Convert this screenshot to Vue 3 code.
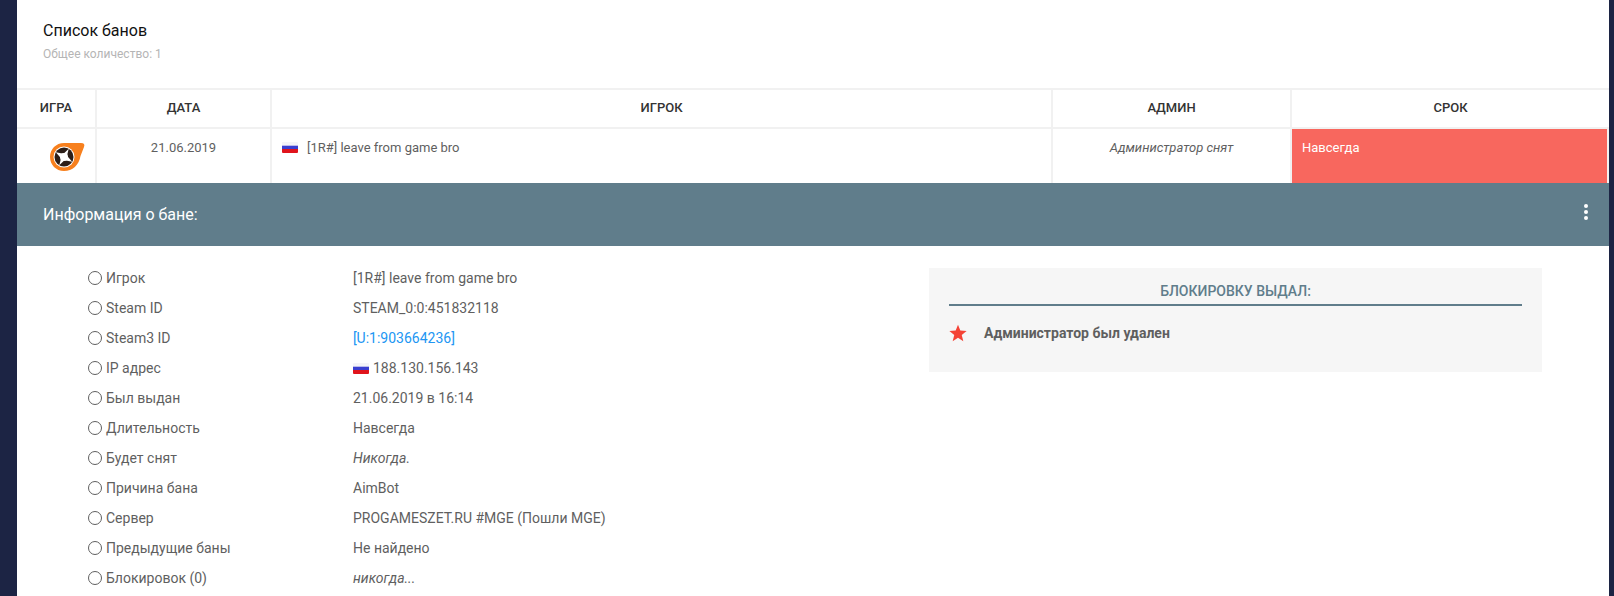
<template>
  <div class="page">
    <div class="card">
      <div class="card-head">
        <h2 class="title">Список банов</h2>
        <small class="subtitle">Общее количество: 1</small>
      </div>

      <div class="ban-row ban-row--head">
        <div class="cell cell--th">Игра</div>
        <div class="cell cell--th">Дата</div>
        <div class="cell cell--th">Игрок</div>
        <div class="cell cell--th">Админ</div>
        <div class="cell cell--th cell--last">Срок</div>
      </div>
      <div class="ban-row ban-row--body">
        <div class="cell cell--icon">
          <svg class="game-icon" viewBox="0 0 36 30" width="36" height="30">
            <path d="M15 1 H32 C35 1 36 2.5 35 5 L31.500 14 C30 23 23.500 29 15 29 C7 29 1 22.700 1 15 C1 7.300 7 1 15 1 Z" fill="#f7801e" />
            <circle cx="15" cy="15" r="10.500" fill="#fff" />
            <circle cx="15" cy="15" r="9.500" fill="#2c1e18" />
            <path d="M15 5.500 L17 12.500 L24.500 15 L17 17.500 L15 24.500 L13 17.500 L5.500 15 L13 12.500 Z" fill="#fff" transform="rotate(30 15 15)" />
            <circle cx="15" cy="15" r="4" fill="#fff" />
          </svg>
        </div>
        <div class="cell cell--center">21.06.2019</div>
        <div class="cell cell--player">
          <span class="flag"></span>
          <span>[1R#] leave from game bro</span>
        </div>
        <div class="cell cell--center"><em>Администратор снят</em></div>
        <div class="cell cell--term">Навсегда</div>
      </div>

      <div class="band">
        <span class="band-title">Информация о бане:</span>
        <span class="dots"><i></i><i></i><i></i></span>
      </div>

      <div class="info">
        <ul class="facts">
          <li v-for="f in facts" :key="f.label" class="fact">
            <span class="fact-label"><span class="ring"></span>{{ f.label }}</span>
            <span class="fact-value">
              <span v-if="f.flag" class="flag flag--ip"></span>
              <a v-if="f.link" class="link">{{ f.value }}</a>
              <em v-else-if="f.italic">{{ f.value }}</em>
              <template v-else>{{ f.value }}</template>
            </span>
          </li>
        </ul>

        <aside class="issuer">
          <div class="issuer-title">Блокировку выдал:</div>
          <div class="issuer-row">
            <svg class="star" viewBox="0 0 24 24" width="18" height="18">
              <path d="M12 1 L15.100 8.800 L23.500 9.400 L17 14.700 L19.100 22.900 L12 18.400 L4.900 22.900 L7 14.700 L0.500 9.400 L8.900 8.800 Z" fill="#f44336" />
            </svg>
            <b>Администратор был удален</b>
          </div>
        </aside>
      </div>
    </div>
  </div>
</template>

<script setup>
const facts = [
  { label: 'Игрок', value: '[1R#] leave from game bro' },
  { label: 'Steam ID', value: 'STEAM_0:0:451832118' },
  { label: 'Steam3 ID', value: '[U:1:903664236]', link: true },
  { label: 'IP адрес', value: '188.130.156.143', flag: true },
  { label: 'Был выдан', value: '21.06.2019 в 16:14' },
  { label: 'Длительность', value: 'Навсегда' },
  { label: 'Будет снят', value: 'Никогда.', italic: true },
  { label: 'Причина бана', value: 'AimBot' },
  { label: 'Сервер', value: 'PROGAMESZET.RU #MGE (Пошли MGE)' },
  { label: 'Предыдущие баны', value: 'Не найдено' },
  { label: 'Блокировок (0)', value: 'никогда...', italic: true },
];
</script>

<style>
html,
body {
  margin: 0;
  height: 596px;
  overflow: hidden;
  background: #1c2444;
}
</style>

<style scoped>
.page {
  height: 596px;
  padding: 0 5px 0 17px;
  box-sizing: border-box;
  font-family: Roboto, "Liberation Sans", sans-serif;
  font-size: 14px;
  color: #5f5f5f;
}
.card {
  height: 596px;
  overflow: hidden;
  background: #fff;
}
.card-head {
  height: 88px;
  padding: 21px 26px 0;
  box-sizing: border-box;
}
.title {
  margin: 0;
  font-size: 16px;
  font-weight: 400;
  line-height: 19px;
  color: #111;
}
.subtitle {
  display: block;
  margin-top: 7px;
  font-size: 12px;
  line-height: 14px;
  color: #b5b5b5;
}
.ban-row {
  display: grid;
  grid-template-columns: 80px 175px 781px 239px 1fr;
  border-top: 2px solid #f1f1f1;
  box-sizing: border-box;
}
.ban-row--head {
  height: 39px;
}
.ban-row--body {
  height: 56px;
}
.cell {
  border-right: 2px solid #f1f1f1;
  box-sizing: border-box;
  padding: 10px;
  line-height: 17px;
  font-size: 13px;
}
.cell--th {
  padding-top: 9px;
  text-align: center;
  font-weight: 500;
  font-size: 13px;
  text-transform: uppercase;
  color: #333;
}
.cell--last {
  border-right: 0;
}
.cell--center {
  text-align: center;
}
.cell--icon {
  padding: 13px 0 0 32px;
}
.game-icon {
  display: block;
}
.cell--player {
  display: flex;
  align-items: flex-start;
  gap: 9px;
}
.cell--term {
  background: #f8675e;
  color: #fff;
}
.flag {
  display: inline-block;
  flex: none;
  width: 16px;
  height: 11px;
  margin-top: 3px;
  border-radius: 1px;
  background: linear-gradient(#f4f4f8 0 30%, #3a3fd0 36% 62%, #e0141c 68% 100%);
}
.flag--ip {
  margin: 0 4px -1px 0;
}
.band {
  display: flex;
  align-items: center;
  justify-content: space-between;
  height: 63px;
  padding: 0 21px 0 26px;
  background: #607d8b;
  color: #fff;
}
.band-title {
  font-size: 16px;
}
.dots {
  display: flex;
  flex-direction: column;
  gap: 2px;
  margin-top: -5px;
}
.dots i {
  display: block;
  width: 4px;
  height: 4px;
  border-radius: 50%;
  background: #fff;
}
.info {
  display: flex;
  align-items: flex-start;
  padding-top: 22px;
}
.facts {
  width: 912px;
  margin: 0;
  padding: 0 0 0 71px;
  box-sizing: border-box;
  list-style: none;
}
.fact {
  display: flex;
  height: 30px;
  line-height: 20px;
}
.fact-label {
  display: flex;
  align-items: center;
  width: 265px;
  height: 20px;
}
.ring {
  width: 12px;
  height: 12px;
  margin-right: 4px;
  border: 1px solid #5f5f5f;
  border-radius: 50%;
}
.fact-value {
  flex: 1;
}
.link {
  color: #2196f3;
}
.issuer {
  width: 613px;
  height: 104px;
  padding: 15px 20px 0;
  box-sizing: border-box;
  background: #f6f6f6;
}
.issuer-title {
  padding-bottom: 4px;
  border-bottom: 2px solid #607d8b;
  text-align: center;
  font-size: 14px;
  font-weight: 500;
  line-height: 17px;
  text-transform: uppercase;
  color: #607d8b;
}
.issuer-row {
  display: flex;
  align-items: center;
  gap: 17px;
  margin-top: 18px;
}
</style>
